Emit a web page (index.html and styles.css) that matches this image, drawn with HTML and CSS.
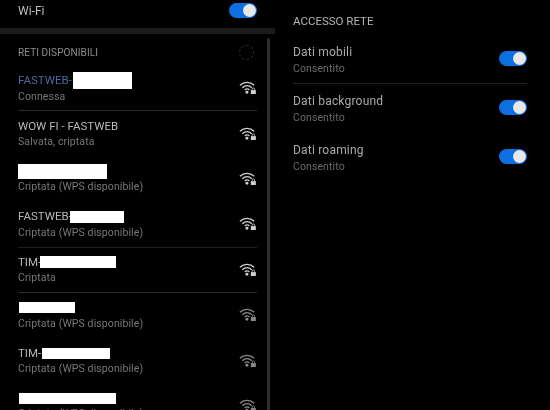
FILE: index.html
```html
<!DOCTYPE html>
<html lang="it">
<head>
<meta charset="utf-8">
<title>Wi-Fi</title>
<link rel="stylesheet" href="styles.css">
</head>
<body>
<svg class="defs" width="0" height="0" aria-hidden="true">
  <symbol id="wifi" viewBox="0 0 18 14">
    <g fill="none" stroke="currentColor" stroke-width="1.4">
      <path d="M0.8 4.6C5.2 0.4 11.8 0.4 16.2 4.6"/>
      <path d="M3.4 7.2C6.4 4.4 10.6 4.4 13.6 7.2"/>
      <path d="M6 9.6C7.6 8.2 9.4 8.2 11 9.6"/>
    </g>
    <circle cx="8.4" cy="12.2" r="1.6" fill="currentColor"/>
    <rect x="12.6" y="9.8" width="5.4" height="4.2" fill="currentColor"/>
    <path d="M14 10V8.8a1.3 1.3 0 0 1 2.6 0V10" fill="none" stroke="currentColor" stroke-width="0.9"/>
  </symbol>
</svg>
<main class="screen">
  <section class="left">
    <div class="wifi-row">
      <span class="wifi-label">Wi-Fi</span>
      <span class="toggle"><span class="knob"></span></span>
    </div>
    <div class="strip"></div>
    <div class="list-wrap">
      <div class="list">
        <div class="list-head">
          <span class="head-label">RETI DISPONIBILI</span>
          <span class="spinner"></span>
        </div>
        <div class="net">
          <div class="net-text">
            <div class="name active">FASTWEB-<span class="mask m1"></span></div>
            <div class="sub">Connessa</div>
          </div>
          <svg class="icon"><use href="#wifi"/></svg>
        </div>
        <div class="net line">
          <div class="net-text">
            <div class="name">WOW FI - FASTWEB</div>
            <div class="sub">Salvata, criptata</div>
          </div>
          <svg class="icon"><use href="#wifi"/></svg>
        </div>
        <div class="net">
          <div class="net-text">
            <div class="name"><span class="mask m2"></span></div>
            <div class="sub">Criptata (WPS disponibile)</div>
          </div>
          <svg class="icon"><use href="#wifi"/></svg>
        </div>
        <div class="net">
          <div class="net-text">
            <div class="name">FASTWEB-<span class="mask m3"></span></div>
            <div class="sub">Criptata (WPS disponibile)</div>
          </div>
          <svg class="icon"><use href="#wifi"/></svg>
        </div>
        <div class="net faint">
          <div class="net-text">
            <div class="name">TIM-<span class="mask m4"></span></div>
            <div class="sub">Criptata</div>
          </div>
          <svg class="icon"><use href="#wifi"/></svg>
        </div>
        <div class="net line">
          <div class="net-text">
            <div class="name"><span class="mask m5"></span></div>
            <div class="sub">Criptata (WPS disponibile)</div>
          </div>
          <svg class="icon dim"><use href="#wifi"/></svg>
        </div>
        <div class="net">
          <div class="net-text">
            <div class="name">TIM-<span class="mask m6"></span></div>
            <div class="sub">Criptata (WPS disponibile)</div>
          </div>
          <svg class="icon dim"><use href="#wifi"/></svg>
        </div>
        <div class="net">
          <div class="net-text">
            <div class="name"><span class="mask m7"></span></div>
            <div class="sub">Criptata (WPS disponibile)</div>
          </div>
          <svg class="icon dim"><use href="#wifi"/></svg>
        </div>
      </div>
      <div class="scrollbar"></div>
    </div>
  </section>
  <section class="right">
    <h2 class="section-title">ACCESSO RETE</h2>
    <div class="perm">
      <div class="perm-text">
        <div class="perm-name">Dati mobili</div>
        <div class="perm-sub">Consentito</div>
      </div>
      <span class="toggle"><span class="knob"></span></span>
    </div>
    <div class="perm ruled">
      <div class="perm-text">
        <div class="perm-name">Dati background</div>
        <div class="perm-sub">Consentito</div>
      </div>
      <span class="toggle"><span class="knob"></span></span>
    </div>
    <div class="perm">
      <div class="perm-text">
        <div class="perm-name">Dati roaming</div>
        <div class="perm-sub">Consentito</div>
      </div>
      <span class="toggle"><span class="knob"></span></span>
    </div>
  </section>
</main>
</body>
</html>
```
FILE: styles.css
```css
* { box-sizing: border-box; }
html, body { margin: 0; padding: 0; background: #000; }
body { width: 550px; height: 410px; overflow: hidden; font-family: Roboto, "Liberation Sans", sans-serif; }
.defs { position: absolute; }
.screen { display: flex; width: 550px; height: 410px; overflow: hidden; filter: blur(0.4px); }
.left { width: 275px; flex: none; }
.right { flex: 1; padding: 14px 23px 0 18px; }

.wifi-row { height: 28px; padding: 0 18px 7px 18px; display: flex; align-items: center; justify-content: space-between; }
.wifi-label { font-size: 12px; color: #bcbcbc; }
.strip { height: 6px; background: #1b1b1b; }

.list-wrap { display: flex; height: 376px; padding-top: 4px; }
.list { width: 239px; margin-left: 18px; flex: none; }
.scrollbar { width: 3px; margin-left: 10px; background: #2e2e2e; border-radius: 2px 2px 0 0; height: 380px; flex: none; }

.list-head { height: 27px; padding-top: 1px; display: flex; align-items: center; justify-content: space-between; padding-right: 3px; }
.head-label { font-size: 10px; letter-spacing: 0.1px; color: #8d8d8d; }
.spinner { width: 15px; height: 15px; border: 1.5px dashed #2e2e2e; border-radius: 50%; }

.net { height: 45.4px; flex: none; display: flex; align-items: center; justify-content: space-between; border-top: 1px solid transparent; padding-right: 1px; padding-bottom: 1px; }
.net.line { border-top-color: #2b2b2b; }
.net.faint { border-top-color: #1f1f1f; }

.name { font-size: 11.5px; line-height: 15px; height: 16px; color: #b8b8b8; display: flex; align-items: center; }
.name.active { color: #51679f; }
.sub { font-size: 10.5px; line-height: 15px; color: #777; letter-spacing: 0.1px; }
.net-text { padding-top: 1px; }
.mask { display: inline-block; height: 15px; background: #fff; flex: none; }
.m1 { width: 59px; height: 17px; margin-left: 1px; }
.m2 { width: 89px; }
.m3 { width: 54px; height: 12px; margin-left: -2px; }
.m4 { width: 76px; height: 12px; margin-left: -1px; }
.m5 { width: 56px; height: 11px; margin-left: 1px; }
.m6 { width: 68px; height: 11px; margin-left: 1px; }
.m7 { width: 97px; height: 11px; margin-left: 1px; }

.icon { width: 17px; height: 13px; flex: none; color: #cfcfcf; }
.icon.dim { color: #8a8a8a; }

.toggle { width: 28px; height: 15px; border-radius: 8px; background: #0d6fe0; display: flex; align-items: center; justify-content: flex-end; padding-right: 1px; flex: none; }
.knob { width: 13px; height: 13px; border-radius: 50%; background: #e8e8ea; }

.section-title { margin: 0 0 5px 0; font-size: 11.5px; line-height: 15px; font-weight: 400; color: #b4b4b4; }
.perm { height: 49px; display: flex; align-items: center; justify-content: space-between; }
.perm.ruled { border-top: 1px solid #222; padding-bottom: 1px; }
.perm-text { padding-top: 3px; }
.perm-name { font-size: 12px; line-height: 16px; color: #a9a9a9; letter-spacing: 0.2px; }
.perm-sub { font-size: 10.5px; line-height: 15px; margin-top: 1px; color: #6a6a6a; letter-spacing: 0.1px; }
```
